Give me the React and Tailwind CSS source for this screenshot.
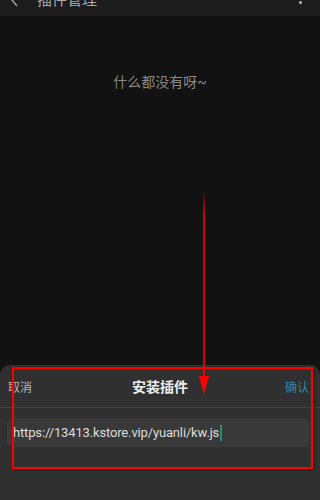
export default function App() {
  const font = { fontFamily: 'Roboto, "Noto Sans CJK SC", sans-serif' };
  return (
    <div className="relative w-[320px] h-[500px] overflow-hidden bg-[#121212] flex flex-col" style={font}>
      {/* top bar (cropped) */}
      <div className="h-[16px] shrink-0 bg-[#1c1c1c] overflow-hidden">
        <div className="-mt-[11px] h-[22px] flex items-center pl-[10px] pr-[18px]">
          <svg width="10" height="14" viewBox="0 0 10 14" className="text-[#9a9a9a]">
            <path d="M7 1 L2 7 L7 13" fill="none" stroke="currentColor" strokeWidth="1.6" />
          </svg>
          <span className="ml-[17px] text-[15px] text-[#a8a8a8]">插件管理</span>
          <span className="ml-auto w-[3px] h-[3px] rounded-full bg-[#bbbbbb] mt-[4px]" />
        </div>
      </div>
      {/* content */}
      <div className="flex-1 flex flex-col items-center">
        <div className="mt-[56px] text-[14px] leading-[20px] text-[#8a8a8a]">什么都没有呀~</div>
      </div>
      {/* bottom sheet */}
      <div className="h-[135px] shrink-0 bg-[#303030] rounded-t-[10px] flex flex-col">
        <div className="h-[43px] flex items-center justify-between px-[8px] pt-[3px] border-b border-[#424242]">
          <span className="text-[12px] text-[#b8b8b8] w-[40px]">取消</span>
          <span className="text-[14px] font-bold text-[#eeeeee]">安装插件</span>
          <span className="text-[12px] text-[#2f88ad] w-[40px] text-right pr-[3px]">确认</span>
        </div>
        <div className="mt-[10px] ml-[7px] mr-[10px] h-[29px] rounded-[6px] bg-[#393939] flex items-center pl-[6px]">
          <span className="text-[13px] tracking-[-0.15px] text-[#dcdcdc]">https://13413.kstore.vip/yuanli/kw.js</span>
          <span className="w-[1.5px] h-[16px] bg-[#1f8f86] ml-[1px]" />
        </div>
      </div>
      {/* red annotations */}
      <div className="absolute left-[12px] top-[367px] w-[301px] h-[102px] border-2 border-[#ff0000] shadow-[1px_1px_2px_rgba(0,0,0,0.6)]" />
      <svg className="absolute left-0 top-0" width="320" height="500" viewBox="0 0 320 500">
        <defs>
          <linearGradient id="fade" x1="0" y1="190" x2="0" y2="215" gradientUnits="userSpaceOnUse">
            <stop offset="0" stopColor="#ff0000" stopOpacity="0" />
            <stop offset="1" stopColor="#ff0000" stopOpacity="1" />
          </linearGradient>
        </defs>
        <line x1="204" y1="190" x2="204" y2="378" stroke="url(#fade)" strokeWidth="1.6" />
        <polygon points="199,376 209,376 204,394" fill="#ff0000" />
      </svg>
    </div>
  );
}
